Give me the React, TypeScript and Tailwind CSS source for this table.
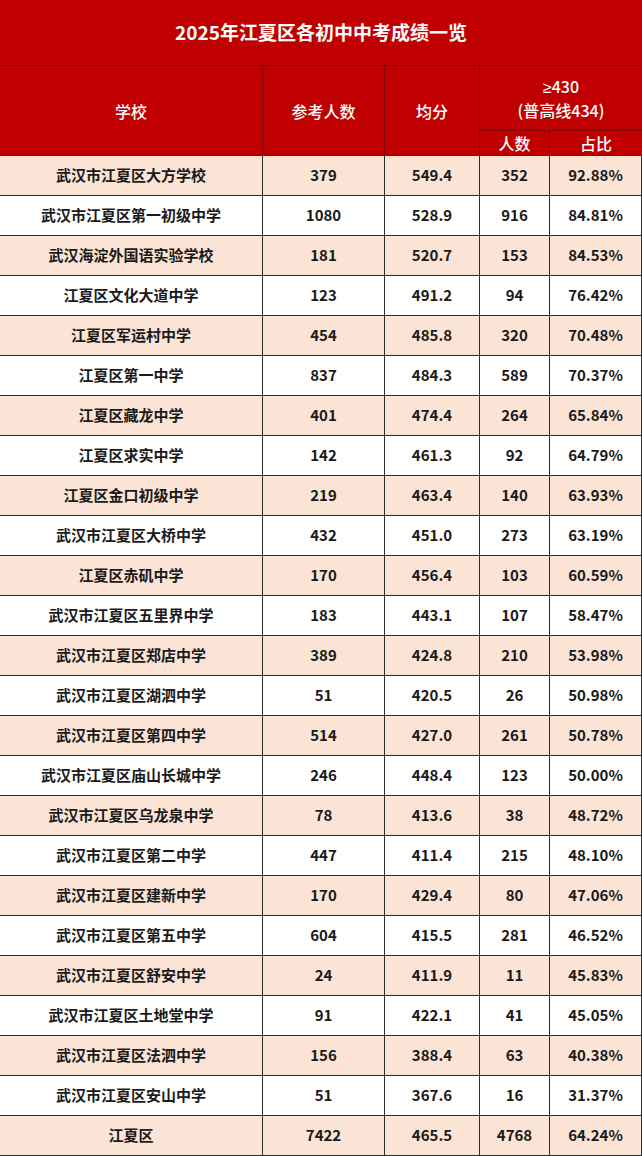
const rows: [string, string, string, string, string][] = [
  ["武汉市江夏区大方学校", "379", "549.4", "352", "92.88%"],
  ["武汉市江夏区第一初级中学", "1080", "528.9", "916", "84.81%"],
  ["武汉海淀外国语实验学校", "181", "520.7", "153", "84.53%"],
  ["江夏区文化大道中学", "123", "491.2", "94", "76.42%"],
  ["江夏区军运村中学", "454", "485.8", "320", "70.48%"],
  ["江夏区第一中学", "837", "484.3", "589", "70.37%"],
  ["江夏区藏龙中学", "401", "474.4", "264", "65.84%"],
  ["江夏区求实中学", "142", "461.3", "92", "64.79%"],
  ["江夏区金口初级中学", "219", "463.4", "140", "63.93%"],
  ["武汉市江夏区大桥中学", "432", "451.0", "273", "63.19%"],
  ["江夏区赤矶中学", "170", "456.4", "103", "60.59%"],
  ["武汉市江夏区五里界中学", "183", "443.1", "107", "58.47%"],
  ["武汉市江夏区郑店中学", "389", "424.8", "210", "53.98%"],
  ["武汉市江夏区湖泗中学", "51", "420.5", "26", "50.98%"],
  ["武汉市江夏区第四中学", "514", "427.0", "261", "50.78%"],
  ["武汉市江夏区庙山长城中学", "246", "448.4", "123", "50.00%"],
  ["武汉市江夏区乌龙泉中学", "78", "413.6", "38", "48.72%"],
  ["武汉市江夏区第二中学", "447", "411.4", "215", "48.10%"],
  ["武汉市江夏区建新中学", "170", "429.4", "80", "47.06%"],
  ["武汉市江夏区第五中学", "604", "415.5", "281", "46.52%"],
  ["武汉市江夏区舒安中学", "24", "411.9", "11", "45.83%"],
  ["武汉市江夏区土地堂中学", "91", "422.1", "41", "45.05%"],
  ["武汉市江夏区法泗中学", "156", "388.4", "63", "40.38%"],
  ["武汉市江夏区安山中学", "51", "367.6", "16", "31.37%"],
  ["江夏区", "7422", "465.5", "4768", "64.24%"],
];

export default function App() {
  return (
    <div
      className="w-[642px] bg-white"
      style={{ fontFamily: '"Noto Sans CJK SC", "Noto Sans", sans-serif' }}
    >
      {/* title bar */}
      <div className="h-[66px] bg-[#c00000] border-b border-[#7c0a0a] flex items-center justify-center text-white font-bold text-[19px]">
        2025年江夏区各初中中考成绩一览
      </div>

      {/* header */}
      <div className="grid grid-cols-[263px_122px_95px_70px_92px] h-[89px] bg-[#c00000] text-white text-[16px] font-medium">
        <div className="flex items-center justify-center border-r border-[#7c0a0a]">学校</div>
        <div className="flex items-center justify-center border-r border-[#7c0a0a]">参考人数</div>
        <div className="flex items-center justify-center border-r border-[#7c0a0a]">均分</div>
        <div className="col-span-2 flex flex-col">
          <div className="h-[65px] flex flex-col items-center justify-center leading-[23px] border-b border-[#7c0a0a]">
            <span>
              <span className="font-['Liberation_Sans',sans-serif]">≥</span>430
            </span>
            <span>(普高线434)</span>
          </div>
          <div className="flex-1 grid grid-cols-[70px_92px]">
            <div className="flex items-center justify-center border-r border-[#7c0a0a]">人数</div>
            <div className="flex items-center justify-center">占比</div>
          </div>
        </div>
      </div>

      {/* data rows */}
      <div className="border-t border-[#3a2a2a]">
        {rows.map((r, i) => (
          <div
            key={i}
            className={
              "grid grid-cols-[263px_122px_95px_70px_92px] h-[40px] border-b border-[#2e2e2e] text-[15px] font-bold text-[#1a1a1a] " +
              (i % 2 === 0 ? "bg-[#fbe4d5]" : "bg-white")
            }
          >
            <div className="flex items-center justify-center border-r border-[#2e2e2e]">{r[0]}</div>
            <div className="flex items-center justify-center border-r border-[#2e2e2e]">{r[1]}</div>
            <div className="flex items-center justify-center border-r border-[#2e2e2e]">{r[2]}</div>
            <div className="flex items-center justify-center border-r border-[#2e2e2e]">{r[3]}</div>
            <div className="flex items-center justify-center border-r border-[#2e2e2e]">{r[4]}</div>
          </div>
        ))}
      </div>
    </div>
  );
}
